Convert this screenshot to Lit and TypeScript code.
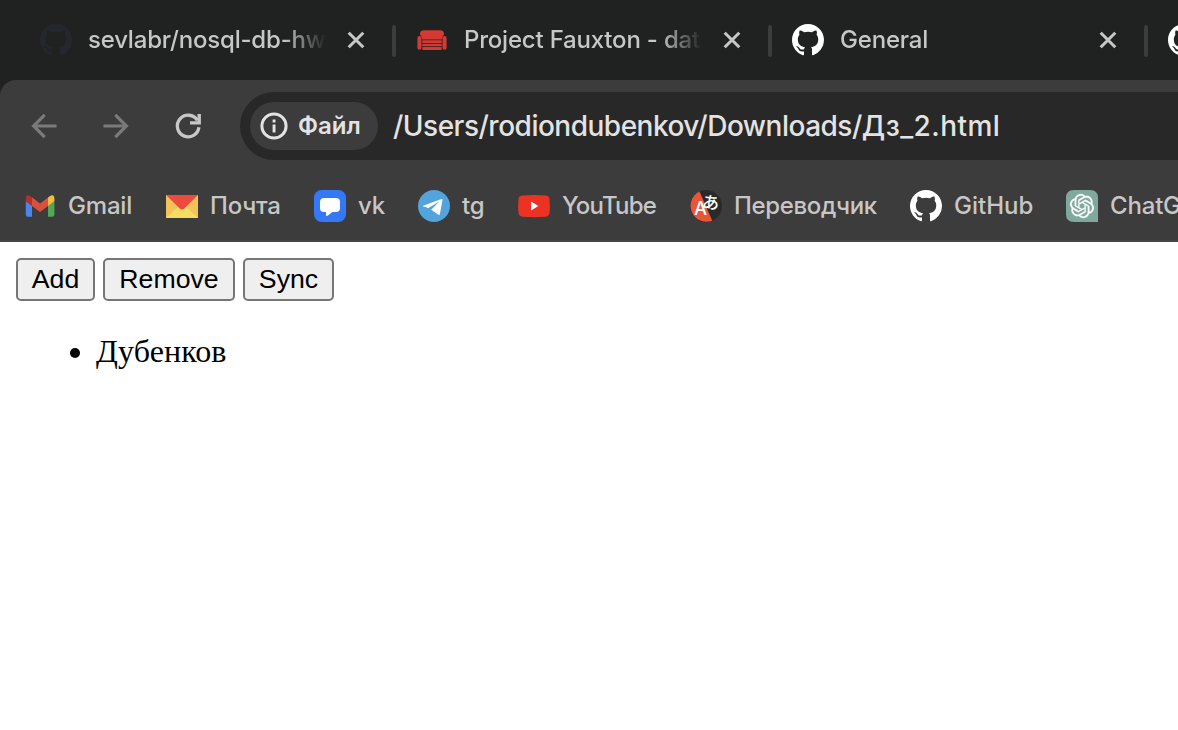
import { LitElement, html, css, svg, nothing } from "lit";
import { customElement, property } from "lit/decorators.js";

const octocat = "M8 0C3.58 0 0 3.58 0 8c0 3.54 2.29 6.53 5.47 7.59.4.07.55-.17.55-.38 0-.19-.01-.82-.01-1.49-2.01.37-2.53-.49-2.69-.94-.09-.23-.48-.94-.82-1.13-.28-.15-.68-.52-.01-.53.63-.01 1.08.58 1.23.82.72 1.21 1.87.87 2.33.66.07-.52.28-.87.51-1.07-1.78-.2-3.64-.89-3.64-3.95 0-.87.31-1.59.82-2.15-.08-.2-.36-1.02.08-2.12 0 0 .67-.21 2.2.82.64-.18 1.32-.27 2-.27s1.36.09 2 .27c1.53-1.04 2.2-.82 2.2-.82.44 1.1.16 1.92.08 2.12.51.56.82 1.27.82 2.15 0 3.07-1.87 3.75-3.65 3.95.29.25.54.73.54 1.48 0 1.07-.01 1.93-.01 2.2 0 .21.15.46.55.38A8.01 8.01 0 0 0 16 8c0-4.42-3.58-8-8-8Z";

const openai = "M22.282 9.821a5.985 5.985 0 0 0-.516-4.91 6.046 6.046 0 0 0-6.51-2.9A6.065 6.065 0 0 0 4.981 4.18a5.985 5.985 0 0 0-3.998 2.9 6.046 6.046 0 0 0 .743 7.097 5.98 5.98 0 0 0 .51 4.911 6.051 6.051 0 0 0 6.515 2.9A5.985 5.985 0 0 0 13.26 24a6.056 6.056 0 0 0 5.772-4.206 5.99 5.99 0 0 0 3.997-2.9 6.056 6.056 0 0 0-.747-7.073zM13.26 22.43a4.476 4.476 0 0 1-2.876-1.04l.141-.081 4.779-2.758a.795.795 0 0 0 .392-.681v-6.737l2.02 1.168a.071.071 0 0 1 .038.052v5.583a4.504 4.504 0 0 1-4.494 4.494zM3.6 18.304a4.47 4.47 0 0 1-.535-3.014l.142.085 4.783 2.759a.771.771 0 0 0 .78 0l5.843-3.369v2.332a.08.08 0 0 1-.033.062L9.74 19.95a4.5 4.5 0 0 1-6.14-1.646zM2.34 7.896a4.485 4.485 0 0 1 2.366-1.973V11.6a.766.766 0 0 0 .388.676l5.815 3.355-2.02 1.168a.076.076 0 0 1-.071 0l-4.83-2.786A4.504 4.504 0 0 1 2.34 7.872zm16.597 3.855l-5.833-3.387L15.119 7.2a.076.076 0 0 1 .071 0l4.83 2.791a4.494 4.494 0 0 1-.676 8.105v-5.678a.79.79 0 0 0-.407-.667zm2.01-3.023l-.141-.085-4.774-2.782a.776.776 0 0 0-.785 0L9.409 9.23V6.897a.066.066 0 0 1 .028-.061l4.83-2.787a4.5 4.5 0 0 1 6.68 4.66zm-12.64 4.135l-2.02-1.164a.08.08 0 0 1-.038-.057V6.075a4.5 4.5 0 0 1 7.375-3.453l-.142.08L8.704 5.46a.795.795 0 0 0-.393.681zm1.097-2.365l2.602-1.5 2.607 1.5v2.999l-2.597 1.5-2.607-1.5z";

const glyphs: Record<string, unknown> = {
  github: svg`<path transform="scale(2)" fill="currentColor" d=${octocat} />`,
  couch: svg`<g fill="#d33a33">
    <path d="M8 6.3H24Q28 6.4 28 10V11Q26.2 11.6 26 15.4H6Q5.8 11.6 4 11V10Q4 6.4 8 6.3Z"/>
    <rect x="1.4" y="12" width="4.1" height="13.8" rx="2"/><rect x="26.5" y="12" width="4.1" height="13.8" rx="2"/>
    <rect x="6.2" y="16.2" width="19.6" height="3" rx=".8"/><rect x="6.2" y="19.9" width="19.6" height="2.4" rx=".6"/><rect x="6.2" y="23" width="19.6" height="3" rx="1.2"/></g>`,
  close: svg`<path d="M8.7 8.7 23.3 23.3M23.3 8.7 8.7 23.3" fill="none" stroke="currentColor" stroke-width="3"/>`,
  back: svg`<path d="M28.5 16H6M16.7 4.9 5.6 16l11.1 11.1" fill="none" stroke="currentColor" stroke-width="3.2"/>`,
  forward: svg`<path d="M3.5 16H26M15.3 4.9 26.4 16 15.3 27.1" fill="none" stroke="currentColor" stroke-width="3.2"/>`,
  reload: svg`<path d="M26.9 17.2A10.8 10.8 0 1 1 25.4 10.4" fill="none" stroke="currentColor" stroke-width="3.3"/><path d="M25.5 3.9h3.4v10.7H18v-3.4h7.5Z" fill="currentColor"/>`,
  info: svg`<circle cx="16" cy="16" r="12.1" fill="none" stroke="currentColor" stroke-width="3"/><path d="M14.6 14.4h2.9v8h-2.9ZM14.6 9.6h2.9v2.9h-2.9Z" fill="currentColor"/>`,
  gmail: svg`<path fill="#4c85ee" d="M1.8 10.5 8 15v11.8H4q-2.2 0-2.2-2.2Z"/><path fill="#53a757" d="M24 15l6.4-4.5v14.1q0 2.2-2.2 2.2H24Z"/><path fill="#f4bc3c" d="M24 7.6 26 6q4.4-2.4 4.4 2.8v2.3L24 16Z"/><path fill="#b5302a" d="M1.8 8.8Q1.8 3.6 6.3 6L8 7.4V16l-6.2-4.8Z"/><path fill="#d9503f" d="m8 7.3 8 6.1 8-6V16l-8 6.1L8 16Z"/>`,
  mail: svg`<path fill="#f3c35a" d="M0 5h32v23H0Z"/><path fill="#f8dd62" d="m0 28 12.5-11.5h7L32 28Z"/><path fill="#ed4b40" d="M0 5h32L18 18.7q-2 1.6-4 0Z"/>`,
  vk: svg`<rect width="32" height="32" rx="7.5" fill="#3478f6"/><path fill="#fff" d="M10 8h12q4 0 4 4v6q0 4-4 4h-3.5c-2 1.2-3.6 3.8-6.5 4V22h-2q-4 0-4-4v-6q0-4 4-4Z"/>`,
  telegram: svg`<circle cx="16" cy="16" r="16" fill="#53a3dc"/><path fill="#fff" d="M5.2 15.7 23.4 9c.8-.3 1.3.1 1.1 1.1l-2.6 14c-.2.9-.8 1.1-1.5.7l-7.2-5.1 8.1-8.1L10.4 18l-5-1.5q-1-.3-.2-.8Z"/>`,
  youtube: svg`<path fill="#eb3223" d="M4.5 5.4q11.5-.9 23 0 3.6.3 4 3.5.8 7.1 0 14.2-.4 3.3-4 3.6-11.5.9-23 0-3.6-.3-4-3.6-.8-7.1 0-14.2.4-3.2 4-3.5Z"/><path fill="#fff" d="m13 11.6 7.4 4.5-7.4 4.5Z"/>`,
  translate: svg`<circle cx="16" cy="16" r="16" fill="#292929"/><path fill="#e95538" d="M9.5 1.4A16 16 0 0 0 22.3 30.7Z"/>
    <text x="4" y="24.6" fill="#fff" font-family="Inter, sans-serif" font-size="18.5" font-weight="500">A</text>
    <text x="12" y="19" fill="#fff" font-family="Noto Sans CJK JP, sans-serif" font-size="17" font-weight="500" transform="rotate(8 22 14)">あ</text>`,
  chatgpt: svg`<path fill="#80a99d" d="M8 0h16q8 0 8 8v24H8q-8 0-8-8V8q0-8 8-8Z"/><path transform="translate(4 4)" fill="#fff" stroke="#fff" stroke-width=".25" d=${openai} />`,
};

@customElement("ui-icon")
export class UiIcon extends LitElement {
  @property() name = "";
  static styles = css`
    :host { display: block; flex: none; width: 32px; height: 32px; }
    .glyph { display: block; width: 100%; height: 100%; overflow: visible; }
  `;
  render() {
    return html`<svg class="glyph" viewBox="0 0 32 32" aria-hidden="true">${glyphs[this.name] ?? nothing}</svg>`;
  }
}

const tabs = [
  { icon: "github", tone: "dim", title: "sevlabr/nosql-db-hw" },
  { icon: "couch", tone: "", title: "Project Fauxton - dat" },
  { icon: "github", tone: "", title: "General" },
  { icon: "github", tone: "", title: "" },
];

const bookmarks = [
  { icon: "gmail", title: "Gmail", size: "b1" },
  { icon: "mail", title: "Почта", size: "b2" },
  { icon: "vk", title: "vk", size: "b3" },
  { icon: "telegram", title: "tg", size: "b4" },
  { icon: "youtube", title: "YouTube", size: "b5" },
  { icon: "translate", title: "Переводчик", size: "b6" },
  { icon: "github", title: "GitHub", size: "b7" },
  { icon: "chatgpt", title: "ChatGPT", size: "b8" },
];

@customElement("app-root")
export class AppRoot extends LitElement {
  static styles = css`
    :host { display: block; width: 100%; height: 730px; overflow: hidden; background: #fff; font-family: Inter, "Liberation Sans", sans-serif; }
    .chrome { background: #202221; }
    .tabs { display: flex; height: 80px; padding-left: 40px; overflow: hidden; }
    .tab { display: flex; flex: none; align-items: center; width: 376px; height: 80px; }
    .label { flex: none; width: 240px; margin-left: 16px; overflow: hidden; white-space: nowrap; color: #c7c7c7; font-size: 24px; font-weight: 450; letter-spacing: -0.2px; line-height: 36px; -webkit-mask-image: linear-gradient(90deg, #000 196px, transparent 238px); mask-image: linear-gradient(90deg, #000 196px, transparent 238px); }
    .close { margin-left: 12px; color: #c7c7c7; }
    .divider { width: 4px; height: 32px; margin: 2px 0 0 20px; border-radius: 2px; background: #3c3c3c; }
    .fav { color: #fff; }
    .dim { color: #24272d; }
    .panel { height: 160px; background: #3c3c3c; border-bottom: 2px solid #464446; border-top-left-radius: 16px; }
    .toolbar { display: flex; align-items: center; height: 92px; padding-left: 28px; }
    .nav { color: #7a7a7a; margin-right: 40px; }
    .reload { color: #c7c7c7; margin-right: 36px; }
    .address { display: flex; flex: 1; align-items: center; height: 68px; padding-left: 10px; border-radius: 34px 0 0 34px; background: #282828; color: #e3e3e3; white-space: nowrap; }
    .chip { display: flex; flex: none; align-items: center; width: 128px; height: 48px; padding-left: 8px; box-sizing: border-box; border-radius: 24px; background: #3c3c3c; font-size: 24px; font-weight: 600; }
    .chip-text { margin-left: 8px; padding-bottom: 2px; }
    .url { margin-left: 15px; font-size: 28px; font-weight: 450; line-height: 40px; }
    .folder { letter-spacing: -0.5px; }
    .file { letter-spacing: 0.45px; }
    .bookmarks { display: flex; height: 68px; padding-left: 24px; overflow: hidden; }
    .bookmark { display: flex; flex: none; align-items: center; height: 68px; color: #c7c7c7; font-size: 24px; font-weight: 450; letter-spacing: -0.18px; white-space: nowrap; }
    .name { margin-left: 12px; padding-bottom: 2px; }
    .b1 { width: 142px; } .b2 { width: 148px; } .b3 { width: 104px; } .b4 { width: 100px; }
    .b5 { width: 172px; letter-spacing: -0.78px; } .b6 { width: 220px; letter-spacing: -0.35px; } .b7 { width: 156px; letter-spacing: 0; } .b8 { width: 180px; }
    .page { padding: 16px; }
    .actions { display: flex; gap: 8px; }
    .action { height: 43px; margin: 0; padding: 0 0 2px; border: 2px solid #767676; border-radius: 5px; background: #efefef; color: #000; font: 26.67px/30px "Liberation Sans", sans-serif; }
    .add { width: 79px; } .remove { width: 132px; } .sync { width: 91px; }
    .list { margin: 32px 0; padding-left: 80px; font: 32px/37px "Liberation Serif", serif; letter-spacing: 0.12px; color: #000; }
  `;
  render() {
    return html`
      <header class="chrome">
        <nav class="tabs">
          ${tabs.map((t) => html`<div class="tab">
            <ui-icon class="fav ${t.tone}" name=${t.icon}></ui-icon>
            <span class="label">${t.title}</span>
            <ui-icon class="close" name="close"></ui-icon>
            <span class="divider"></span>
          </div>`)}
        </nav>
        <div class="panel">
          <div class="toolbar">
            <ui-icon class="nav" name="back"></ui-icon>
            <ui-icon class="nav" name="forward"></ui-icon>
            <ui-icon class="reload" name="reload"></ui-icon>
            <div class="address">
              <div class="chip"><ui-icon name="info"></ui-icon><span class="chip-text">Файл</span></div>
              <span class="url"><span class="folder">/Users/rodiondubenkov/Downloads/</span><span class="file">Дз_2.html</span></span>
            </div>
          </div>
          <div class="bookmarks">
            ${bookmarks.map((b) => html`<div class="bookmark ${b.size}"><ui-icon class="fav" name=${b.icon}></ui-icon><span class="name">${b.title}</span></div>`)}
          </div>
        </div>
      </header>
      <main class="page">
        <div class="actions">
          <button class="action add">Add</button>
          <button class="action remove">Remove</button>
          <button class="action sync">Sync</button>
        </div>
        <ul class="list"><li>Дубенков</li></ul>
      </main>`;
  }
}
